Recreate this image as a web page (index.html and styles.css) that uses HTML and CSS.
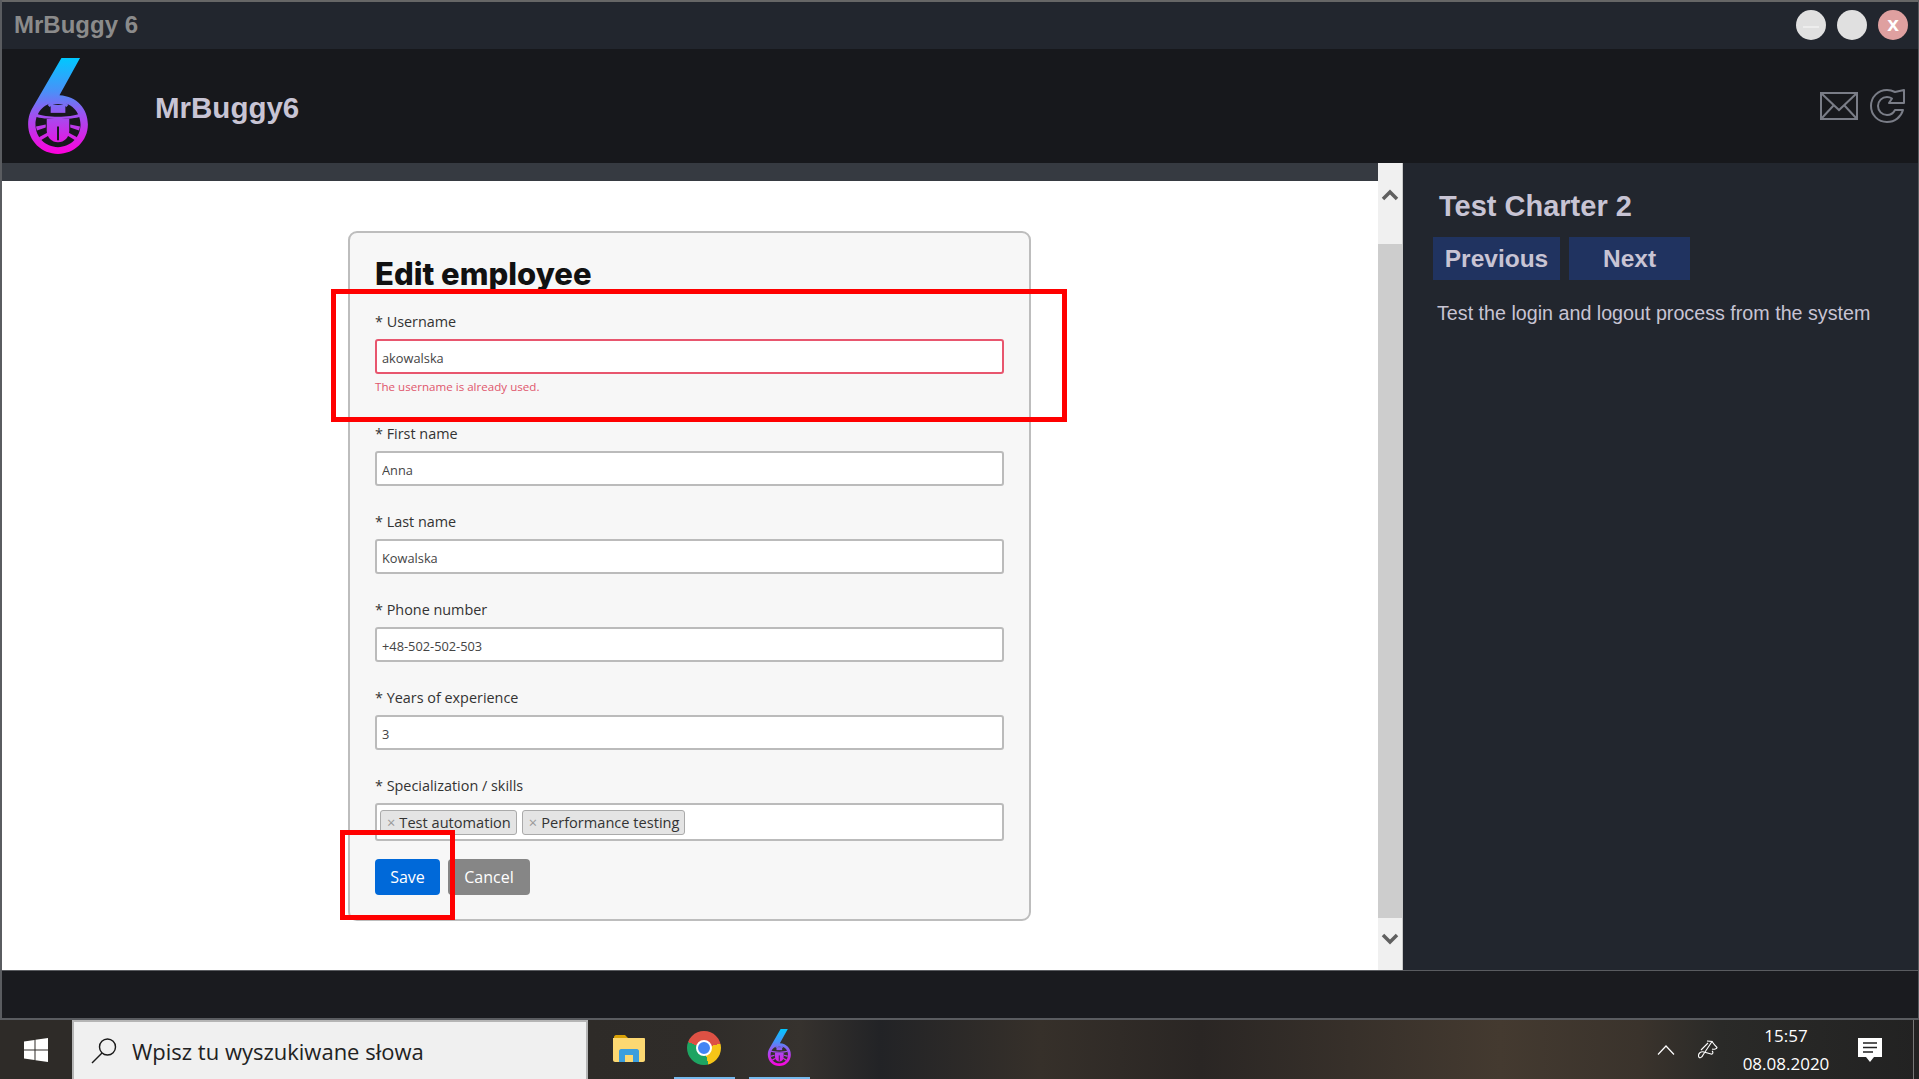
FILE: index.html
```html
<!DOCTYPE html>
<html lang="en">
<head>
    <meta charset="UTF-8">
    <meta name="viewport" content="width=device-width, initial-scale=1.0">
    <title>MrBuggy 6</title>
    <link rel="stylesheet" href="styles.css">
</head>
<body>
    <svg class="defs" width="0" height="0">
        <defs>
            <linearGradient id="logoFill" x1="0" y1="0" x2="0" y2="98" gradientUnits="userSpaceOnUse">
                <stop offset="0" stop-color="#00c8ff"/>
                <stop offset="0.35" stop-color="#4a90f8"/>
                <stop offset="0.6" stop-color="#a050f0"/>
                <stop offset="1" stop-color="#ff00dc"/>
            </linearGradient>
            <symbol id="bugLogo" viewBox="0 0 62 98">
                <path fill="url(#logoFill)" fill-rule="evenodd" d="M34 0H53L32 38C50 39 61 52 61 68C61 85 47 98 30.5 98C14 98 0 85 0 68C0 60 2 55 5 50ZM30.5 45C17.5 45 7.5 55 7.5 68C7.5 81 17.5 91 30.5 91C43.5 91 53.5 81 53.5 68C53.5 55 43.5 45 30.5 45Z"/>
                <g fill="url(#logoFill)">
                    <path d="M20 48C24 42 37 42 41 48L39 50C35 46 26 46 22 50Z"/>
                    <path d="M23 48H38V56H23Z"/>
                    <path d="M9 57C17 61 44 61 52 57L53 60C47 63 14 63 8 60Z"/>
                    <path d="M19 62H42V74C42 81 37 86 30.5 86C24 86 19 81 19 74Z"/>
                    <path d="M8 70L18 68V71L9 74Z"/>
                    <path d="M53 70L43 68V71L52 74Z"/>
                    <path d="M11 81L20 76L21 79L13 84Z"/>
                    <path d="M50 81L41 76L40 79L48 84Z"/>
                </g>
                <path d="M30.5 70V84" stroke="#17181c" stroke-width="2" fill="none"/>
            </symbol>
        </defs>
    </svg>

    <div class="window">
        <div class="titlebar">
            <span class="app-title">MrBuggy 6</span>
            <div class="win-buttons">
                <span class="win-btn"><i class="dash"></i></span>
                <span class="win-btn"></span>
                <span class="win-btn win-close">x</span>
            </div>
        </div>

        <header class="app-header">
            <svg class="logo"><use href="#bugLogo"/></svg>
            <span class="app-name">MrBuggy6</span>
            <div class="header-icons">
                <svg class="icon-mail" viewBox="0 0 38 28" fill="none" stroke="#7a7d87" stroke-width="2">
                    <rect x="1" y="1" width="36" height="26"/>
                    <path d="M1 1L19 18L37 1M1 27L14 13M37 27L24 13"/>
                </svg>
                <svg class="icon-refresh" viewBox="0 0 36 34" fill="none" stroke="#7a7d87" stroke-width="2">
                    <path d="M26 3C23 1.500 20.500 1 18 1C9 1 2 8 2 17C2 26 9 33 18 33C26 33 32 28 34 21H26C24.500 24 21.500 26 18 26C13 26 9 22 9 17C9 12 13 8 18 8C20 8 21.500 8.500 23 9.500L20 14H35V1Z" stroke-linejoin="round"/>
                </svg>
            </div>
        </header>

        <div class="main">
            <div class="content">
                <div class="content-strip"></div>
                <div class="page">
                    <form class="card">
                        <h1 class="card-title">Edit employee</h1>

                        <div class="form-group">
                            <label class="form-label">* Username</label>
                            <input class="form-input is-invalid" value="akowalska">
                            <div class="form-error">The username is already used.</div>
                        </div>
                        <div class="form-group">
                            <label class="form-label">* First name</label>
                            <input class="form-input" value="Anna">
                        </div>
                        <div class="form-group">
                            <label class="form-label">* Last name</label>
                            <input class="form-input" value="Kowalska">
                        </div>
                        <div class="form-group">
                            <label class="form-label">* Phone number</label>
                            <input class="form-input" value="+48-502-502-503">
                        </div>
                        <div class="form-group">
                            <label class="form-label">* Years of experience</label>
                            <input class="form-input" value="3">
                        </div>
                        <div class="form-group form-group-last">
                            <label class="form-label">* Specialization / skills</label>
                            <div class="tag-input">
                                <span class="tag"><i class="tag-x">×</i>Test automation</span>
                                <span class="tag"><i class="tag-x">×</i>Performance testing</span>
                            </div>
                        </div>

                        <div class="form-actions">
                            <button type="button" class="btn btn-save">Save</button>
                            <button type="button" class="btn btn-cancel">Cancel</button>
                        </div>
                    </form>

                    <div class="mark mark-username"></div>
                    <div class="mark mark-save"></div>
                </div>
            </div>

            <div class="scrollbar">
                <svg class="scroll-arrow" viewBox="0 0 18 12" fill="none" stroke="#606060" stroke-width="3.500"><path d="M2 10L9 3L16 10"/></svg>
                <div class="scroll-track"><div class="scroll-thumb"></div></div>
                <svg class="scroll-arrow" viewBox="0 0 18 12" fill="none" stroke="#606060" stroke-width="3.500"><path d="M2 2L9 9L16 2"/></svg>
            </div>

            <aside class="charter">
                <h2 class="charter-title">Test Charter 2</h2>
                <div class="charter-nav">
                    <button type="button" class="nav-btn nav-prev">Previous</button>
                    <button type="button" class="nav-btn nav-next">Next</button>
                </div>
                <p class="charter-text">Test the login and logout process from the system</p>
            </aside>
        </div>

        <div class="statusbar"></div>
    </div>

    <div class="taskbar">
        <div class="start">
            <svg viewBox="0 0 24 24" class="win-logo" fill="#fff">
                <path d="M0 3.400L10.500 2V11.500H0ZM11.500 1.800L24 0V11.500H11.500ZM0 12.500H10.500V22L0 20.600ZM11.500 12.500H24V24L11.500 22.200Z"/>
            </svg>
        </div>
        <div class="search">
            <svg class="search-icon" viewBox="0 0 26 26" fill="none" stroke="#1a1a1a" stroke-width="1.400">
                <circle cx="16.500" cy="9" r="8"/>
                <path d="M11 15L1 25"/>
            </svg>
            <span class="search-text">Wpisz tu wyszukiwane słowa</span>
        </div>
        <div class="task-apps">
            <div class="task-app">
                <svg class="folder" viewBox="0 0 32 27">
                    <path d="M1 2C1 1 2 0 3 0H12L15 3H1Z" fill="#d9a106"/>
                    <path d="M0 3H31C31.500 3 32 3.500 32 4V25C32 26 31 27 30 27H2C1 27 0 26 0 25Z" fill="#fcd872"/>
                    <path d="M6 27V16C6 15 7 14 8 14H24C25 14 26 15 26 16V27H20V20H12V27Z" fill="#3b9ede"/>
                </svg>
            </div>
            <div class="task-app is-open">
                <div class="chrome"><div class="chrome-dot"></div></div>
            </div>
            <div class="task-app is-open">
                <svg class="logo-small"><use href="#bugLogo"/></svg>
            </div>
        </div>
        <div class="tray">
            <svg class="tray-chevron" viewBox="0 0 18 10" fill="none" stroke="#fff" stroke-width="1.200"><path d="M1 9.500L9 1L17 9.500"/></svg>
            <svg class="tray-pen" viewBox="0 0 20 20" fill="none" stroke="#fff" stroke-width="1.100">
                <path d="M3 10L10 3M9 1L14 1.500L5 15C4 18 0.500 19 0.500 15.500C0.500 13 3 11 6 12L13 14C15 14.500 15.500 12 14 11"/>
                <path d="M14 1.500C15 3 16.500 5 19 7.500C19 9 16 9.500 14 9"/>
            </svg>
            <div class="clock">
                <div>15:57</div>
                <div>08.08.2020</div>
            </div>
            <svg class="tray-note" viewBox="0 0 24 24">
                <path d="M0 0H24V19H16L12 24L8 19H0Z" fill="#fff"/>
                <path d="M5 5H19M5 9.500H19M5 14H15" stroke="#222" stroke-width="1.300"/>
            </svg>
            <div class="show-desktop"></div>
        </div>
    </div>
</body>
</html>
```

FILE: styles.css
```css
* {
    box-sizing: border-box;
}
html, body {
    margin: 0;
    height: 100%;
    overflow: hidden;
}
body {
    font-family: "Liberation Sans", Arial, sans-serif;
    background: #1a1b1f;
    display: flex;
    flex-direction: column;
}
.defs {
    position: absolute;
}

/* app window */
.window {
    height: 1020px;
    display: flex;
    flex-direction: column;
    border-left: 2px solid #5a5c60;
    border-right: 1px solid #5a5c60;
    border-bottom: 2px solid #5a5c60;
}
.titlebar {
    height: 49px;
    flex: none;
    background: #22262e;
    border-top: 2px solid #666;
    display: flex;
    align-items: center;
    justify-content: space-between;
    padding: 0 10px 2px 12px;
}
.app-title {
    font-size: 24px;
    font-weight: bold;
    color: #8b8b8b;
}
.win-buttons {
    display: flex;
    gap: 11px;
}
.win-btn {
    width: 30px;
    height: 30px;
    border-radius: 50%;
    background: #e0e0e0;
    display: flex;
    align-items: center;
    justify-content: center;
    color: #fff;
    font-weight: bold;
    font-size: 21px;
    line-height: 1;
    padding-bottom: 3px;
}
.win-close {
    background: #dfa0a0;
}
.dash {
    width: 16px;
    height: 2px;
    background: #ededed;
    margin-top: 8px;
}
.app-header {
    height: 114px;
    flex: none;
    background: #17181c;
    display: flex;
    align-items: center;
    padding: 0 13px 0 26px;
}
.logo {
    width: 61px;
    height: 96px;
}
.app-name {
    font-size: 29.500px;
    font-weight: bold;
    color: #c8c4d4;
    margin-left: 66px;
    padding-top: 3px;
}
.header-icons {
    margin-left: auto;
    display: flex;
    align-items: center;
    gap: 11px;
}
.icon-mail {
    width: 38px;
    height: 28px;
}
.icon-refresh {
    width: 36px;
    height: 34px;
}

.main {
    flex: 1;
    display: flex;
    min-height: 0;
}
.content {
    width: 1376px;
    display: flex;
    flex-direction: column;
    background: #fff;
}
.content-strip {
    height: 18px;
    flex: none;
    background: #363a41;
}
.page {
    position: relative;
    flex: 1;
    padding: 50px 0 0 346px;
}

/* form */
.card {
    width: 683px;
    height: 690px;
    background: #f7f7f7;
    border: 2px solid #bdbdbd;
    border-radius: 9px;
    padding: 22px 25px 0 25px;
    font-family: "Open Sans", sans-serif;
}
.card-title {
    margin: 0 0 20px;
    font-family: Inter, sans-serif;
    font-size: 31px;
    line-height: 38px;
    font-weight: 800;
    color: #111;
}
.form-group {
    margin-bottom: 27px;
}
.form-group-last {
    margin-bottom: 18px;
}
.form-label {
    display: block;
    font-size: 14.400px;
    line-height: 17px;
    margin-bottom: 9px;
    color: #333;
}
.form-input {
    display: block;
    width: 100%;
    height: 35px;
    padding: 3px 5px 0;
    font-family: "Open Sans", sans-serif;
    font-size: 12.800px;
    color: #444;
    background: #fff;
    border: 2px solid #bbb;
    border-radius: 3px;
    outline: none;
}
.is-invalid {
    border-color: #e8566e;
}
.form-error {
    margin-top: 5px;
    padding-bottom: 3px;
    font-size: 11.600px;
    line-height: 16px;
    color: #e0566c;
}
.tag-input {
    height: 38px;
    background: #fff;
    border: 2px solid #bbb;
    border-radius: 3px;
    padding: 5px 3px 0;
    display: flex;
    gap: 5px;
}
.tag {
    height: 25px;
    padding: 0 5px 0 6px;
    background: #e4e4e4;
    border: 1px solid #aaa;
    border-radius: 3px;
    font-size: 14.600px;
    line-height: 23px;
    color: #333;
    white-space: nowrap;
}
.tag-x {
    font-style: normal;
    color: #999;
    margin-right: 4px;
}
.form-actions {
    display: flex;
    gap: 8px;
}
.btn {
    height: 36px;
    border: none;
    border-radius: 4px;
    font-family: "Open Sans", sans-serif;
    font-size: 16px;
    color: #fff;
}
.btn-save {
    width: 65px;
    background: #0069d9;
}
.btn-cancel {
    width: 82px;
    background: #868686;
}

/* red marks drawn over the form */
.mark {
    position: absolute;
    border: 5px solid #ff0000;
}
.mark-username {
    left: 329px;
    top: 108px;
    width: 736px;
    height: 133px;
}
.mark-save {
    left: 338px;
    top: 649px;
    width: 115px;
    height: 90px;
}

/* scrollbar */
.scrollbar {
    width: 25px;
    flex: none;
    background: #f0f0f0;
    border-right: 1px solid #c8c8c8;
    display: flex;
    flex-direction: column;
    align-items: center;
}
.scroll-arrow {
    width: 18px;
    height: 12px;
    flex: none;
    margin: 26px 0 6px;
}
.scroll-track {
    flex: 1;
    width: 100%;
    padding-top: 37px;
}
.scroll-thumb {
    height: 100%;
    background: #cdcdcd;
}
.scroll-track + .scroll-arrow {
    margin: 15px 0 25px;
}

/* right panel */
.charter {
    flex: 1;
    background: #22262e;
    padding: 23px 0 0 30px;
    color: #c8c4d4;
}
.charter-title {
    margin: 0 0 11px 6px;
    font-size: 29px;
    line-height: 40px;
    font-weight: bold;
}
.charter-nav {
    display: flex;
    gap: 9px;
}
.nav-btn {
    height: 43px;
    border: none;
    background: #203360;
    color: #c8c4d4;
    font-family: "Liberation Sans", Arial, sans-serif;
    font-size: 24.500px;
    font-weight: bold;
    padding: 0;
}
.nav-prev {
    width: 127px;
}
.nav-next {
    width: 121px;
}
.charter-text {
    margin: 21px 0 0 4px;
    font-size: 19.700px;
    line-height: 24px;
    white-space: nowrap;
}

.statusbar {
    height: 48px;
    flex: none;
    background: #1a1b1f;
    border-top: 1px solid #5a5c60;
}

/* windows taskbar */
.taskbar {
    height: 59px;
    flex: none;
    display: flex;
    align-items: stretch;
    background: linear-gradient(90deg, #2e2b28 0, #2e2b28 590px, #2f2c29 700px, #36322e 800px, #222326 880px, #36302a 1040px, #2a2624 1200px, #443a30 1500px, #3a332c 1640px, #2a2a28 1720px, #222 1919px);
}
.start {
    width: 72px;
    display: flex;
    align-items: center;
    justify-content: center;
}
.win-logo {
    width: 24px;
    height: 24px;
}
.search {
    width: 516px;
    display: flex;
    align-items: center;
    background: #f0f0f0;
    border: 2px solid #b5b5b5;
    border-bottom: none;
    padding-left: 17px;
}
.search-icon {
    width: 26px;
    height: 26px;
}
.search-text {
    margin-left: 15px;
    font-family: "Open Sans", sans-serif;
    font-size: 22px;
    color: #222;
}
.task-apps {
    display: flex;
}
.task-app {
    display: flex;
    align-items: center;
    justify-content: center;
    padding-bottom: 2px;
}
.task-app:first-child {
    width: 62px;
    margin-left: 10px;
}
.task-app.is-open {
    width: 61px;
    margin-left: 14px;
    border-bottom: 2px solid #76b9ed;
}
.folder {
    width: 32px;
    height: 27px;
}
.chrome {
    width: 34px;
    height: 34px;
    margin-right: 2px;
    border-radius: 50%;
    background: conic-gradient(#dd5144 0 75deg, #f5c518 75deg 165deg, #1da462 165deg 290deg, #dd5144 290deg 360deg);
    display: flex;
    align-items: center;
    justify-content: center;
}
.chrome-dot {
    width: 16px;
    height: 16px;
    border-radius: 50%;
    background: #4285f4;
    border: 2px solid #fff;
}
.logo-small {
    width: 25px;
    height: 37px;
}
.tray {
    margin-left: auto;
    display: flex;
    align-items: center;
    color: #fff;
}
.tray-chevron {
    width: 18px;
    height: 10px;
    margin-right: 23px;
}
.tray-pen {
    width: 20px;
    height: 20px;
    margin-right: 18px;
}
.clock {
    width: 100px;
    text-align: center;
    font-family: "Open Sans", sans-serif;
    font-size: 17px;
    line-height: 28px;
}
.tray-note {
    width: 24px;
    height: 24px;
    margin-left: 22px;
}
.show-desktop {
    width: 1px;
    height: 100%;
    margin-left: 31px;
    margin-right: 5px;
    background: #777;
}
```
